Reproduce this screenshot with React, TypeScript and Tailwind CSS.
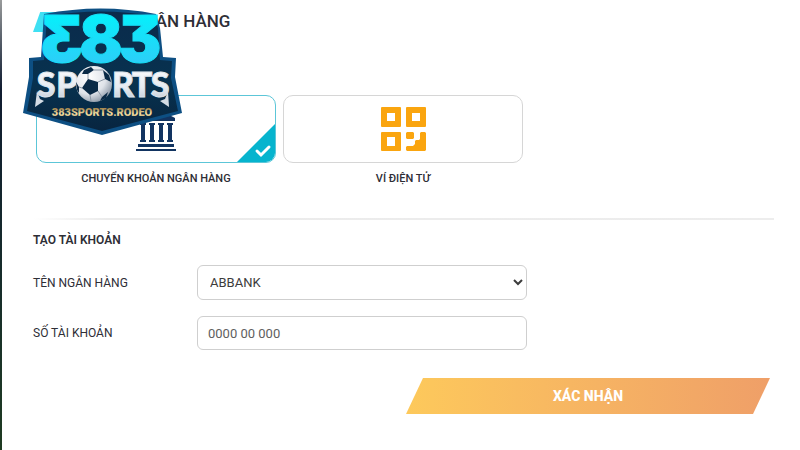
import { useState } from "react";
import type { ReactNode } from "react";

function BrandLogo() {
  return (
    <svg
      role="img"
      aria-label="383 Sports"
      className="absolute left-5 top-0 h-[138px] w-[166px] overflow-visible"
      viewBox="20 0 166 138"
    >
      <defs>
        <linearGradient id="digits" x1="0" y1="0" x2="0" y2="1">
          <stop offset="0.2" stopColor="#06effb" />
          <stop offset="0.8" stopColor="#2bcff8" />
        </linearGradient>
        <linearGradient id="silver" x1="0" y1="0" x2="0" y2="1">
          <stop offset="0" stopColor="#ffffff" />
          <stop offset="0.6" stopColor="#e6ebf1" />
          <stop offset="1" stopColor="#b9c4d0" />
        </linearGradient>
        <linearGradient id="gold" x1="0" y1="0" x2="0" y2="1">
          <stop offset="0.2" stopColor="#a98a50" />
          <stop offset="0.6" stopColor="#f6dfa5" />
          <stop offset="1" stopColor="#b08d4c" />
        </linearGradient>
        <linearGradient id="shield" x1="0" y1="0" x2="0" y2="1">
          <stop offset="0" stopColor="#0b2b4c" />
          <stop offset="0.6" stopColor="#07324f" />
          <stop offset="1" stopColor="#082540" />
        </linearGradient>
        <radialGradient id="ball" cx="0.35" cy="0.3" r="0.8">
          <stop offset="0" stopColor="#ffffff" />
          <stop offset="0.6" stopColor="#dfe3e9" />
          <stop offset="1" stopColor="#7e8b9b" />
        </radialGradient>
      </defs>
      <path
        d="M44 14 Q101 3 156 14 L160 28 L163 57 L176 58 L175 77 L182 113 L102 135 L23 113 L29 77 L29 58 L41 57Z"
        fill="#0d4f83"
      />
      <path
        d="M47 16 Q101 7 154 16 L158 28 L160 60 L172 61 L171 78 L178 111 L102 131 L27 111 L33 78 L33 61 L44 60Z"
        fill="url(#shield)"
      />
      <g
        fill="url(#digits)"
        stroke="#16dff7"
        strokeWidth="1"
        fontFamily="Inter, sans-serif"
        fontWeight="900"
        fontSize="64"
        textAnchor="middle"
        style={{ fontFeatureSettings: '"cv09"' }}
      >
        <text x="-62" y="62" transform="scale(-1 1)">3</text>
        <text x="101" y="62">8</text>
        <text x="140" y="62">3</text>
      </g>
      <g
        fill="url(#silver)"
        stroke="#dce4ec"
        strokeWidth="1"
        fontFamily="Lato, sans-serif"
        fontWeight="900"
        fontSize="34"
        textAnchor="middle"
      >
        <text x="46" y="97">S</text>
        <text x="67" y="97">P</text>
        <text x="123" y="97">R</text>
        <text x="142" y="97">T</text>
        <text x="160" y="97">S</text>
      </g>
      <path d="M37 91 L35 107 L44 101 L40 99Z M168 91 L169 107 L160 101 L165 99Z" fill="#d3dce5" />
      <circle cx="94" cy="84" r="18" fill="url(#ball)" />
      <g fill="#0a2a46">
        <path d="M88 79 L98 82 L98 91 L90 95 L82 88Z" />
        <path d="M84 70 L91 67 L94 70 L88 74 L82 74Z" />
        <path d="M103 70 L109 75 L111 82 L105 79Z" />
        <path d="M76 82 L79 87 L79 93 L77 90Z" />
        <path d="M102 97 L108 92 L106 98 L100 101Z" />
      </g>
      <path
        d="M88 79 L88 74 M98 82 L105 79 M98 91 L102 97 M90 95 L91 101 M82 88 L79 87 M94 70 L103 70"
        stroke="#8c98a6"
        fill="none"
      />
      <text
        x="102"
        y="116"
        textAnchor="middle"
        fill="url(#gold)"
        fontFamily="Roboto, sans-serif"
        fontWeight="900"
        fontSize="11"
      >
        383SPORTS.RODEO
      </text>
    </svg>
  );
}

function BankIcon() {
  return (
    <svg aria-hidden="true" className="h-[43px] w-10" viewBox="0 0 40 43" fill="#123461">
      <path d="M20 0 L39 10 V13 H1 V10Z" />
      <path d="M5 15 H9 V34 H5Z M14 15 H18 V34 H14Z M23 15 H27 V34 H23Z M32 15 H36 V34 H32Z" />
      <path d="M4 15 H10 V17 H4Z M13 15 H19 V17 H13Z M22 15 H28 V17 H22Z M31 15 H37 V17 H31Z" />
      <path d="M4 32 H10 V34 H4Z M13 32 H19 V34 H13Z M22 32 H28 V34 H22Z M31 32 H37 V34 H31Z" />
      <path d="M2 36 H38 V39 H2Z M0 41 H40 V43 H0Z" />
    </svg>
  );
}

function QrIcon() {
  return (
    <svg aria-hidden="true" className="size-[45px]" viewBox="0 0 45 45" fill="#faa50f">
      <path
        fillRule="evenodd"
        d="M1 0H19a1 1 0 0 1 1 1V19a1 1 0 0 1-1 1H1a1 1 0 0 1-1-1V1a1 1 0 0 1 1-1Z M6 6V14H14V6Z M26 0H44a1 1 0 0 1 1 1V19a1 1 0 0 1-1 1H26a1 1 0 0 1-1-1V1a1 1 0 0 1 1-1Z M31 6V14H39V6Z M1 25H19a1 1 0 0 1 1 1V43a1 1 0 0 1-1 1H1a1 1 0 0 1-1-1V26a1 1 0 0 1 1-1Z M6 30V39H14V30Z"
      />
      <path d="M26 25H32L33 26V31L32 32H26L25 31V26Z M40 25H44L45 26V43L44 44H26L25 43V40L26 39H32L34 37V34L35 33H38L39 32V26Z" />
    </svg>
  );
}

type MethodProps = {
  label: string;
  checked: boolean;
  onSelect: () => void;
  children: ReactNode;
};

function Method({ label, checked, onSelect, children }: MethodProps) {
  return (
    <label className="w-60 cursor-pointer text-center">
      <input type="radio" name="method" className="sr-only" checked={checked} onChange={onSelect} />
      <span
        className={`relative flex h-17 items-center justify-center overflow-hidden rounded-[10px] border ${
          checked ? "border-[#5cc6d8]" : "border-[#d6d6d6]"
        }`}
      >
        {children}
        {checked && (
          <svg aria-hidden="true" className="absolute right-0 bottom-0 size-[38px]" viewBox="0 0 38 38">
            <path d="M38 0V38H0Z" fill="#06b4ce" />
            <path d="M20 27l4 4 8-8" stroke="#fff" strokeWidth="3" strokeLinecap="round" fill="none" />
          </svg>
        )}
      </span>
      <span className="mt-1.5 block text-[11px] leading-5 font-medium">{label}</span>
    </label>
  );
}

export default function App() {
  const [method, setMethod] = useState("bank");
  return (
    <div className="relative flex min-h-screen bg-white font-[Roboto,sans-serif] text-[#2e2e36]">
      <div className="w-0.5 shrink-0 bg-linear-to-b from-[#9a9c9c] via-[#101c30] via-20% to-[#1f3b22]" />
      <main className="min-w-0 flex-1 pr-[26px] pl-[31px]">
        <header className="flex h-11 items-center">
          <span className="h-5 w-6 bg-[#3fe0f3] [clip-path:polygon(30%_0,100%_0,70%_100%,0_100%)]" />
          <h1 className="ml-[75px] text-[17px] font-medium">NGÂN HÀNG</h1>
        </header>
        <div className="mt-[51px] flex flex-wrap gap-[7px] pl-[3px]">
          <Method label="CHUYỂN KHOẢN NGÂN HÀNG" checked={method === "bank"} onSelect={() => setMethod("bank")}>
            <BankIcon />
          </Method>
          <Method label="VÍ ĐIỆN TỬ" checked={method === "wallet"} onSelect={() => setMethod("wallet")}>
            <QrIcon />
          </Method>
        </div>
        <hr className="mt-[29px] h-0.5 border-0 bg-linear-to-r from-white via-[#ebebeb] via-10% to-[#ededed]" />
        <form onSubmit={(e) => e.preventDefault()}>
          <h2 className="mt-2.5 text-xs leading-5 font-semibold">TẠO TÀI KHOẢN</h2>
          <div className="mt-[15px] flex items-center">
            <label htmlFor="bank" className="w-[164px] shrink-0 text-xs">
              TÊN NGÂN HÀNG
            </label>
            <select
              id="bank"
              className="h-[35px] w-full max-w-[330px] rounded-md border border-[#cfcfcf] bg-white pl-2 text-[13px] text-[#3c3c3c]"
            >
              <option>ABBANK</option>
            </select>
          </div>
          <div className="mt-4 flex items-center">
            <label htmlFor="account" className="w-[164px] shrink-0 text-xs">
              SỐ TÀI KHOẢN
            </label>
            <input
              id="account"
              placeholder="0000 00 000"
              className="h-[34px] w-full max-w-[330px] rounded-md border border-[#cfcfcf] px-2.5 text-[13px] placeholder:text-[#606060]"
            />
          </div>
          <div className="mt-7 flex justify-end pr-1">
            <button
              type="submit"
              className="h-9 w-[364px] bg-linear-to-r from-[#fdc95b] to-[#ef9f68] text-sm font-extrabold text-white [clip-path:polygon(17px_0,100%_0,calc(100%-17px)_100%,0_100%)]"
            >
              XÁC NHẬN
            </button>
          </div>
        </form>
      </main>
      <BrandLogo />
    </div>
  );
}
